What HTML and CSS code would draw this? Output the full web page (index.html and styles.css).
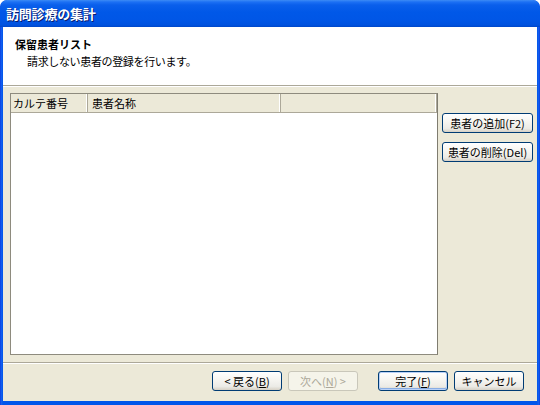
FILE: index.html
```html
<!DOCTYPE html>
<html lang="ja">
<head>
<meta charset="utf-8">
<title>訪問診療の集計</title>
<link rel="stylesheet" href="styles.css">
</head>
<body>
<div class="window">
  <div class="titlebar"><span class="title">訪問診療の集計</span></div>
  <div class="client">
    <div class="header">
      <div class="h-title">保留患者リスト</div>
      <div class="h-sub">請求しない患者の登録を行います。</div>
    </div>
    <div class="main">
      <div class="list">
        <div class="list-head">
          <div class="col c1">カルテ番号</div>
          <div class="col c2">患者名称</div>
          <div class="col c3"></div>
        </div>
        <div class="list-body"></div>
      </div>
      <div class="side">
        <button class="btn side-btn">患者の追加(F2)</button>
        <button class="btn side-btn">患者の削除(Del)</button>
      </div>
    </div>
    <div class="footer">
      <button class="btn nav-btn">&lt; 戻る(<u>B</u>)</button>
      <button class="btn nav-btn disabled">次へ(<u>N</u>) &gt;</button>
      <button class="btn nav-btn default finish">完了(<u>F</u>)</button>
      <button class="btn nav-btn">キャンセル</button>
    </div>
  </div>
</div>
</body>
</html>
```

FILE: styles.css
```css
html, body {
  margin: 0;
  padding: 0;
  background: #ffffff;
}

body {
  font-family: "Noto Sans CJK JP", "Liberation Sans", sans-serif;
  font-size: 11px;
  color: #000;
}

.window {
  width: 540px;
  height: 405px;
  box-sizing: border-box;
  display: flex;
  flex-direction: column;
  background: linear-gradient(to right, #0831D9 0, #1660F0 1px, #0055EA 3px, #0055EA 537px, #1660F0 539px, #0831D9 540px);
  border-radius: 7px 7px 0 0;
  overflow: hidden;
}

.titlebar {
  height: 27px;
  flex: none;
  display: flex;
  align-items: center;
  padding-left: 6px;
  background: linear-gradient(to bottom, #3D8BF5 0, #1C70F4 2px, #0A5FEB 5px, #0058E8 12px, #0056E6 20px, #0052DF 25px, #0047C8 27px);
  border-radius: 7px 7px 0 0;
}

.title {
  color: #fff;
  font-weight: bold;
  font-size: 13px;
  letter-spacing: -0.2px;
  text-shadow: 1px 1px 0 #0A1C6E;
}

.client {
  flex: 1;
  margin: 0 3px 4px 3px;
  background: #ECE9D8;
  display: flex;
  flex-direction: column;
}

.header {
  height: 59px;
  flex: none;
  background: #fff;
  border-bottom: 1px solid #ACA899;
  box-shadow: 0 1px 0 #fff;
  padding-top: 9px;
  box-sizing: border-box;
}

.h-title {
  padding-left: 12px;
  font-weight: bold;
  line-height: 16px;
  height: 16px;
}

.h-sub {
  padding-left: 24px;
  line-height: 16px;
  height: 16px;
  margin-top: 1px;
  letter-spacing: -0.35px;
}

.main {
  flex: none;
  height: 276px;
  margin-top: 1px;
  display: flex;
  padding: 6px 0 0 7px;
  box-sizing: border-box;
  gap: 4px;
  border-bottom: 1px solid #ACA899;
}

.list {
  width: 428px;
  height: 262px;
  flex: none;
  box-sizing: border-box;
  border: 1px solid #8E8B7E;
  border-right-color: #7F7C70;
  background: #fff;
  display: flex;
  flex-direction: column;
}

.list-head {
  height: 19px;
  flex: none;
  display: flex;
  background: #ECE9D8;
  border-bottom: 1px solid #ACA899;
  box-sizing: border-box;
}

.col {
  flex: none;
  box-sizing: border-box;
  line-height: 18px;
  padding-left: 2px;
  border-right: 1px solid #ACA899;
  box-shadow: inset -1px 0 0 #fff;
  white-space: nowrap;
}

.c1 { width: 77px; }
.c2 { width: 193px; padding-left: 4px; }
.c3 { width: 156px; }

.list-body {
  flex: 1;
}

.side {
  display: flex;
  flex-direction: column;
  gap: 9px;
  padding-top: 20px;
}

.btn {
  font-family: "Noto Sans CJK JP", "Liberation Sans", sans-serif;
  font-size: 11px;
  color: #000;
  border: 1px solid #003C74;
  border-radius: 3px;
  background: linear-gradient(to bottom, #FFFFFF 0, #F7F6F2 40%, #ECEBE6 80%, #D6D0C5 100%);
  padding: 0;
  margin: 0;
  box-sizing: border-box;
  height: 20px;
  line-height: 18px;
  white-space: nowrap;
}

.btn u {
  text-decoration: underline;
  text-underline-offset: 1px;
}

.side-btn {
  width: 91px;
}

.footer {
  flex: 1;
  border-top: 1px solid #fff;
  display: flex;
  justify-content: flex-end;
  align-items: flex-start;
  padding: 7px 13px 0 0;
}

.nav-btn {
  width: 70px;
  margin-left: 6px;
}

.finish {
  margin-left: 20px;
}

.default {
  box-shadow: inset 0 0 0 1px #B9D1F7, inset 0 -1px 0 1px #89ADE4;
}

.disabled {
  color: #ACA899;
  border-color: #C9C7BA;
  background: #F5F4EA;
}
```
